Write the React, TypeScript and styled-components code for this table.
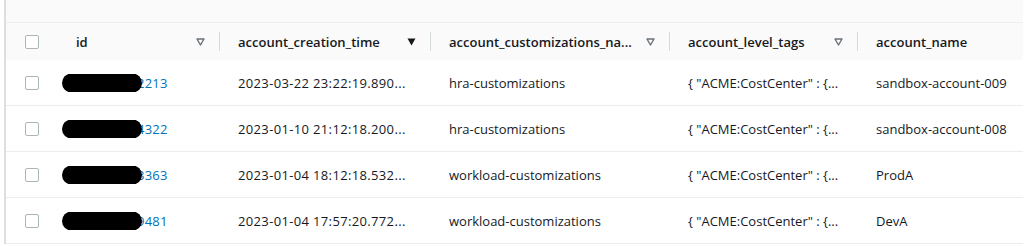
import React from "react";
import styled, { createGlobalStyle } from "styled-components";

const Global = createGlobalStyle`
  html, body { margin: 0; padding: 0; background: #ffffff; }
  body { font-family: "Open Sans", "Liberation Sans", sans-serif; color: #16191f; }
`;

const COLS = "52px 162px 211px 239px 188px 163px";

const Frame = styled.div`
  margin-left: 4px;
  width: 1017px;
  height: 244px;
  border-left: 2px solid #dcdfe1;
  display: flex;
  flex-direction: column;
`;

const TopBar = styled.div`
  height: 22px;
  background: #fafafa;
  border-bottom: 1px solid #eceeef;
`;

const HeaderRow = styled.div`
  display: grid;
  grid-template-columns: ${COLS};
  height: 37px;
  background: #fafafa;
  align-items: center;
`;

const Row = styled.div`
  display: grid;
  grid-template-columns: ${COLS};
  height: 45px;
  border-bottom: 1px solid #eaeded;
  align-items: center;
  background: #ffffff;
`;

const CheckCell = styled.div`
  padding-left: 19px;
  display: flex;
  align-items: center;
`;

const Checkbox = styled.span`
  width: 12px;
  height: 12px;
  border: 1px solid #aab7b8;
  border-radius: 2px;
  background: #ffffff;
  display: inline-block;
`;

const HeadCell = styled.div`
  position: relative;
  display: flex;
  align-items: center;
  height: 100%;
  padding-left: 18px;
  padding-right: 15px;
  font-weight: 600;
  font-size: 13px;
  color: #16191f;
  white-space: nowrap;
`;

const HeadLabel = styled.span`
  flex: 1;
  overflow: hidden;
  text-overflow: ellipsis;
`;

const Divider = styled.span`
  position: absolute;
  right: 0;
  top: 9px;
  width: 1px;
  height: 19px;
  background: #d5dbdb;
`;

const Cell = styled.div<{ $wide?: boolean }>`
  position: relative;
  padding-left: 18px;
  padding-right: 12px;
  font-size: 13px;
  color: #16191f;
  letter-spacing: ${(p) => (p.$wide ? "0.35px" : "0")};
  white-space: nowrap;
  overflow: hidden;
  text-overflow: ellipsis;
`;

const IdLink = styled.span`
  color: #0073bb;
  font-weight: 400;
  letter-spacing: 0.2px;
`;

const Redaction = styled.span`
  position: absolute;
  left: 4px;
  top: 50%;
  transform: translateY(-50%);
  width: 80px;
  height: 19px;
  border-radius: 9.5px;
  background: #000000;
`;

const SortIcon = ({ active }: { active?: boolean }) =>
  active ? (
    <svg width="9" height="8" viewBox="0 0 9 8">
      <path d="M0.5 0.5 H8.5 L4.5 7.5 Z" fill="#16191f" />
    </svg>
  ) : (
    <svg width="9" height="8" viewBox="0 0 9 8">
      <path
        d="M1 1 H8 L4.5 7 Z"
        fill="none"
        stroke="#687078"
        strokeWidth="1.4"
        strokeLinejoin="round"
      />
    </svg>
  );

type Col = { label: string; sort?: "none" | "active"; divider?: boolean };

const columns: Col[] = [
  { label: "id", sort: "none", divider: true },
  { label: "account_creation_time", sort: "active", divider: true },
  { label: "account_customizations_na...", sort: "none", divider: true },
  { label: "account_level_tags", sort: "none", divider: true },
  { label: "account_name" },
];

const rows = [
  ["2213", "2023-03-22 23:22:19.890...", "hra-customizations", "sandbox-account-009"],
  ["4322", "2023-01-10 21:12:18.200...", "hra-customizations", "sandbox-account-008"],
  ["3363", "2023-01-04 18:12:18.532...", "workload-customizations", "ProdA"],
  ["9481", "2023-01-04 17:57:20.772...", "workload-customizations", "DevA"],
];

export default function App() {
  return (
    <>
      <Global />
      <Frame>
        <TopBar />
        <HeaderRow>
          <CheckCell>
            <Checkbox />
          </CheckCell>
          {columns.map((c) => (
            <HeadCell key={c.label}>
              <HeadLabel>{c.label}</HeadLabel>
              {c.sort && <SortIcon active={c.sort === "active"} />}
              {c.divider && <Divider />}
            </HeadCell>
          ))}
        </HeaderRow>
        {rows.map((r) => (
          <Row key={r[0]}>
            <CheckCell>
              <Checkbox />
            </CheckCell>
            <Cell>
              <IdLink>12345678{r[0]}</IdLink>
              <Redaction />
            </Cell>
            <Cell $wide>{r[1]}</Cell>
            <Cell>{r[2]}</Cell>
            <Cell>{'{ "ACME:CostCenter" : {...'}</Cell>
            <Cell>{r[3]}</Cell>
          </Row>
        ))}
      </Frame>
    </>
  );
}
